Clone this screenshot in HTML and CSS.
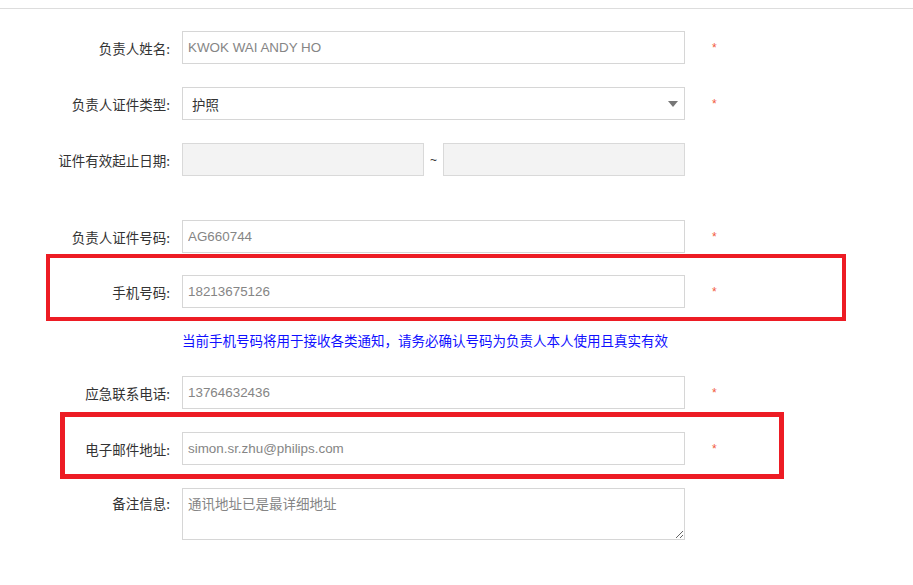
FILE: index.html
```html
<!DOCTYPE html>
<html lang="zh-CN">
<head>
    <meta charset="UTF-8">
    <meta name="viewport" content="width=device-width, initial-scale=1.0">
    <title>负责人信息</title>
    <link rel="stylesheet" href="styles.css">
</head>
<body>
    <div class="topline"></div>

    <div class="page">
        <form class="form">
            <!-- name -->
            <div class="row">
                <label class="label">负责人姓名:</label>
                <input class="field" type="text" value="KWOK WAI ANDY HO" readonly>
                <span class="req">*</span>
            </div>

            <!-- id type -->
            <div class="row">
                <label class="label">负责人证件类型:</label>
                <div class="field select">
                    <span>护照</span>
                    <svg class="arrow" width="10" height="6" viewBox="0 0 10 6"><path d="M0 0 L10 0 L5 6 Z" fill="#777"/></svg>
                </div>
                <span class="req">*</span>
            </div>

            <!-- validity -->
            <div class="row row-date">
                <label class="label">证件有效起止日期:</label>
                <input class="field date" type="text" disabled>
                <span class="tilde">~</span>
                <input class="field date" type="text" disabled>
            </div>

            <!-- id number -->
            <div class="row row-id">
                <label class="label">负责人证件号码:</label>
                <input class="field" type="text" value="AG660744" readonly>
                <span class="req">*</span>
            </div>

            <!-- phone -->
            <div class="row row-phone">
                <label class="label">手机号码:</label>
                <input class="field" type="text" value="18213675126" readonly>
                <span class="req">*</span>
            </div>
            <p class="hint">当前手机号码将用于接收各类通知，请务必确认号码为负责人本人使用且真实有效</p>

            <!-- emergency -->
            <div class="row">
                <label class="label">应急联系电话:</label>
                <input class="field" type="text" value="13764632436" readonly>
                <span class="req">*</span>
            </div>

            <!-- email -->
            <div class="row">
                <label class="label">电子邮件地址:</label>
                <input class="field" type="text" value="simon.sr.zhu@philips.com" readonly>
                <span class="req">*</span>
            </div>

            <!-- remark -->
            <div class="row row-note">
                <label class="label label-top">备注信息:</label>
                <textarea class="field note" readonly>通讯地址已是最详细地址</textarea>
            </div>
        </form>

        <!-- annotation marks -->
        <div class="mark mark-phone"></div>
        <div class="mark mark-email"></div>
    </div>
</body>
</html>
```

FILE: styles.css
```css
body {
    margin: 0;
    padding: 0;
    background-color: #fff;
    font-family: "Noto Sans CJK SC", "Liberation Sans", sans-serif;
    font-size: 13.5px;
    color: #333;
}

.topline {
    height: 8px;
    border-bottom: 1px solid #dddddd;
}

.page {
    position: relative;
    height: 576px;
}

.form {
    margin: 0;
    padding-top: 22px;
}

.row {
    display: flex;
    align-items: center;
    margin-bottom: 23px;
}

.label {
    width: 170px;
    margin-right: 12px;
    text-align: right;
    color: #333;
    white-space: nowrap;
}

.label-top {
    align-self: flex-start;
    margin-top: 5px;
    line-height: 20px;
}

.field {
    width: 503px;
    height: 33px;
    box-sizing: border-box;
    margin: 0;
    padding: 0 5px;
    border: 1px solid #d6d6d6;
    border-radius: 0;
    background-color: #fff;
    font-family: "Liberation Sans", "Noto Sans CJK SC", sans-serif;
    font-size: 13.4px;
    color: #858585;
    outline: none;
}

.select {
    display: flex;
    align-items: center;
    justify-content: space-between;
    padding: 0 6px 0 9px;
    font-family: "Noto Sans CJK SC", sans-serif;
    color: #333;
}

.arrow {
    display: block;
}

.row-date {
    margin-bottom: 44px;
}

.date {
    width: 242px;
    background-color: #f3f3f3;
    border-color: #d9d9d9;
}

.tilde {
    width: 19px;
    text-align: center;
    font-family: "Liberation Sans", sans-serif;
    font-size: 12px;
    color: #333;
}

.row-id {
    margin-bottom: 22px;
}

.row-phone {
    margin-bottom: 22px;
}

.req {
    align-self: flex-start;
    margin-left: 27px;
    margin-top: 11px;
    font-family: "Liberation Sans", sans-serif;
    font-size: 12px;
    line-height: 1;
    color: #f25a3c;
}

.hint {
    margin: 0 0 26px 182px;
    line-height: 20px;
    color: #1010ff;
}

.row-note {
    align-items: flex-start;
}

.note {
    display: block;
    height: 52px;
    padding: 4px 5px;
    line-height: 20px;
    font-family: "Noto Sans CJK SC", sans-serif;
    font-size: 13.5px;
    resize: both;
}

.mark {
    position: absolute;
    box-sizing: border-box;
    border: 4px solid #ed1c24;
}

.mark-phone {
    left: 46px;
    top: 245px;
    width: 800px;
    height: 67px;
}

.mark-email {
    left: 60px;
    top: 403px;
    width: 724px;
    height: 67px;
    border-width: 5px;
}
```
